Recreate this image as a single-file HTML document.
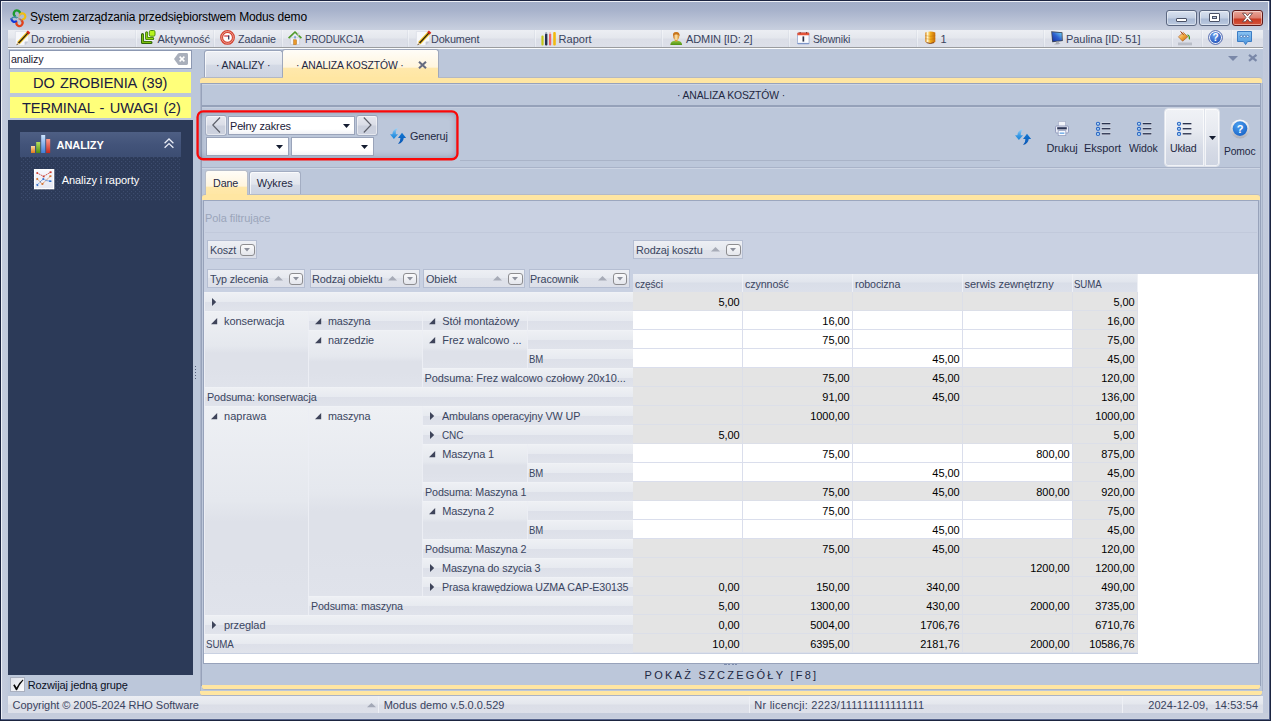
<!DOCTYPE html><html><head><meta charset="utf-8"><title>Modus</title><style>
*{box-sizing:border-box;margin:0;padding:0}
html,body{width:1271px;height:721px;overflow:hidden;background:#bcc7da}
body{font-family:"Liberation Sans",sans-serif;font-size:11px;color:#1e2842;position:relative}
div{position:absolute;white-space:pre}
svg{position:absolute;overflow:visible}
.t{line-height:14px;height:14px}
.r{text-align:right}
</style></head><body>
<div style="left:0px;top:0px;width:1271px;height:721px;background:#1b2440"></div>
<div style="left:1px;top:1px;width:1269px;height:719px;background:#55638c"></div>
<div style="left:1px;top:1px;width:1268px;height:718px;background:#edf0f6"></div>
<div style="left:2px;top:2px;width:1266px;height:716px;background:linear-gradient(#a2aec8,#a7b2cb 8px,#c2cadb 24px,#cad1e0 29px,#bcc6da 60px,#bcc6da)"></div>
<div style="left:2px;top:30px;width:6px;height:683px;background:linear-gradient(90deg,#c4ccdd,#bfc8da)"></div>
<div style="left:1263px;top:30px;width:5px;height:683px;background:linear-gradient(90deg,#c3cbdd,#c1c9db)"></div>
<div style="left:1268px;top:30px;width:1px;height:689px;background:#ccd2e0"></div>
<div style="left:2px;top:713px;width:1266px;height:5px;background:#c5ccdc"></div>
<div style="left:2px;top:718px;width:1266px;height:1px;background:#cbd1df"></div>
<svg style="left:10.4px;top:10.2px" width="15.6" height="15.6" viewBox="0 0 16.4 17"><g fill="none" stroke-linecap="round"><path d="M5.2 6.6A3.4 3.4 0 1 1 10.6 4.4" stroke="#1c9a2c" stroke-width="2.4"/><path d="M5.2 6.6A3.4 3.4 0 0 0 8.2 8.2" stroke="#4c9c8c" stroke-width="1.3"/><path d="M10.8 4.6A3.3 3.3 0 1 1 13.6 10.2" stroke="#f0be14" stroke-width="2.4"/><path d="M10.8 4.6A3.3 3.3 0 0 0 9.6 7.6" stroke="#d0b070" stroke-width="1.3"/><path d="M12.4 11.6A3.4 3.4 0 1 1 6.8 13.0" stroke="#e2421a" stroke-width="2.4"/><path d="M12.4 11.6A3.4 3.4 0 0 0 9.4 9.6" stroke="#b86a50" stroke-width="1.3"/><path d="M6.2 12.4A3.4 3.4 0 0 1 1.2 9.8" stroke="#1238d8" stroke-width="2.4"/><path d="M1.2 9.8A3.4 3.4 0 0 1 6.6 8.6" stroke="#3c84a8" stroke-width="1.3"/></g></svg>
<div class="t" style="left:30px;top:9px;color:#000;font-size:12px;line-height:16px;height:16px;letter-spacing:-0.152px;">System zarządzania przedsiębiorstwem Modus demo</div>
<div style="left:1166px;top:10px;width:31px;height:16px;background:linear-gradient(#d9e2f0,#c3cfe3 7px,#a9b9d4 8px,#bccae0);border:1px solid #5b6781;border-radius:3px;box-shadow:inset 0 0 0 1px rgba(255,255,255,.45)"></div>
<div style="left:1199px;top:10px;width:31px;height:16px;background:linear-gradient(#d9e2f0,#c3cfe3 7px,#a9b9d4 8px,#bccae0);border:1px solid #5b6781;border-radius:3px;box-shadow:inset 0 0 0 1px rgba(255,255,255,.45)"></div>
<div style="left:1232px;top:10px;width:31px;height:16px;background:linear-gradient(#e9a79b,#dc7c6c 7px,#c93a22 8px,#d4553c);border:1px solid #5e1a1a;border-radius:3px;box-shadow:inset 0 0 0 1px rgba(255,255,255,.45)"></div>
<div style="left:1176px;top:18px;width:11px;height:4px;background:#fff;border:1px solid #4a5166;border-radius:1px"></div>
<div style="left:1209px;top:13px;width:11px;height:9px;background:#fff;border:1px solid #4a5166;border-radius:1px"></div>
<div style="left:1212px;top:16px;width:5px;height:3px;background:#bccae0;border:1px solid #4a5166"></div>
<svg style="left:1241px;top:12px" width="13" height="11" viewBox="0 0 13 11"><path d="M1.5 1.2H4.4L6.5 3.8L8.6 1.2H11.5L8 5.5L11.5 9.8H8.6L6.5 7.2L4.4 9.8H1.5L5 5.5Z" fill="#fff" stroke="#5a3a3a" stroke-width=".8"/></svg>
<div style="left:8px;top:30px;width:1255px;height:17px;background:linear-gradient(#eceef3,#e4e7ed 8px,#dbdee7 9px,#dde0e9)"></div>
<div style="left:8px;top:47px;width:1255px;height:1px;background:#9a9c9f"></div>
<div style="left:8px;top:48px;width:1255px;height:1px;background:#fbfcfd"></div>
<div style="left:136px;top:30px;width:1px;height:17px;background:linear-gradient(#f3f5f8,#e6e9f0)"></div>
<div style="left:135px;top:30px;width:1px;height:17px;background:linear-gradient(#e2e5ec,#d3d8e2)"></div>
<div style="left:214px;top:30px;width:1px;height:17px;background:linear-gradient(#f3f5f8,#e6e9f0)"></div>
<div style="left:213px;top:30px;width:1px;height:17px;background:linear-gradient(#e2e5ec,#d3d8e2)"></div>
<div style="left:282px;top:30px;width:1px;height:17px;background:linear-gradient(#f3f5f8,#e6e9f0)"></div>
<div style="left:281px;top:30px;width:1px;height:17px;background:linear-gradient(#e2e5ec,#d3d8e2)"></div>
<div style="left:408px;top:30px;width:1px;height:17px;background:linear-gradient(#f3f5f8,#e6e9f0)"></div>
<div style="left:407px;top:30px;width:1px;height:17px;background:linear-gradient(#e2e5ec,#d3d8e2)"></div>
<div style="left:535px;top:30px;width:1px;height:17px;background:linear-gradient(#f3f5f8,#e6e9f0)"></div>
<div style="left:534px;top:30px;width:1px;height:17px;background:linear-gradient(#e2e5ec,#d3d8e2)"></div>
<div style="left:662px;top:30px;width:1px;height:17px;background:linear-gradient(#f3f5f8,#e6e9f0)"></div>
<div style="left:661px;top:30px;width:1px;height:17px;background:linear-gradient(#e2e5ec,#d3d8e2)"></div>
<div style="left:789px;top:30px;width:1px;height:17px;background:linear-gradient(#f3f5f8,#e6e9f0)"></div>
<div style="left:788px;top:30px;width:1px;height:17px;background:linear-gradient(#e2e5ec,#d3d8e2)"></div>
<div style="left:917px;top:30px;width:1px;height:17px;background:linear-gradient(#f3f5f8,#e6e9f0)"></div>
<div style="left:916px;top:30px;width:1px;height:17px;background:linear-gradient(#e2e5ec,#d3d8e2)"></div>
<div style="left:1044px;top:30px;width:1px;height:17px;background:linear-gradient(#f3f5f8,#e6e9f0)"></div>
<div style="left:1043px;top:30px;width:1px;height:17px;background:linear-gradient(#e2e5ec,#d3d8e2)"></div>
<div style="left:1172px;top:30px;width:1px;height:17px;background:linear-gradient(#f3f5f8,#e6e9f0)"></div>
<div style="left:1171px;top:30px;width:1px;height:17px;background:linear-gradient(#e2e5ec,#d3d8e2)"></div>
<div style="left:1202px;top:30px;width:1px;height:17px;background:linear-gradient(#f3f5f8,#e6e9f0)"></div>
<div style="left:1201px;top:30px;width:1px;height:17px;background:linear-gradient(#e2e5ec,#d3d8e2)"></div>
<div style="left:1232px;top:30px;width:1px;height:17px;background:linear-gradient(#f3f5f8,#e6e9f0)"></div>
<div style="left:1231px;top:30px;width:1px;height:17px;background:linear-gradient(#e2e5ec,#d3d8e2)"></div>
<svg style="left:14.5px;top:30.5px" width="15" height="15" viewBox="0 0 15 15"><path d="M.4 .5H13.6V10.6L9.6 14.6H.4Z" fill="#f7f8fb" stroke="#d9dce5" stroke-width=".7"/><path d="M13.6 10.6L9.6 14.6V11.4Q9.6 10.6 10.4 10.6Z" fill="#c3c8d4"/><path d="M3.4 12.2L13 1.9" stroke="#f0c020" stroke-width="3.4"/><path d="M3.4 12.2L13 1.9" stroke="#241e14" stroke-width="1.3"/><path d="M12.5 2.4L14.1 .7" stroke="#d8281c" stroke-width="3.4"/><path d="M1.5 14.2L2.2 11.1L4.6 13.3Z" fill="#e0c090"/><path d="M1.5 14.2L1.9 12.7L2.9 13.7Z" fill="#3a3a3a"/></svg>
<div class="t" style="left:30.5px;top:32px;color:#39435e;letter-spacing:-0.120px;transform:scaleX(0.9697);transform-origin:0 50%;">Do zrobienia</div>
<svg style="left:140.8px;top:30.4px" width="15" height="15" viewBox="0 0 15 15"><g fill="none" stroke-linejoin="round" stroke-linecap="round"><path d="M1.5 4.6V12.4H10" stroke="#2e6208" stroke-width="3"/><path d="M1.6 4.8V12.3H9.8" stroke="#7cc010" stroke-width="1.3"/><path d="M5.6 2.8V8.6H11.8" stroke="#fff" stroke-width="4.2" opacity=".85"/><path d="M5.6 2.8V8.6H11.8" stroke="#3a7408" stroke-width="3"/><path d="M5.7 3.0V8.5H11.6" stroke="#94d814" stroke-width="1.3"/></g><rect x="7.6" y="-.2" width="7" height="7" rx="1.6" fill="#fff" opacity=".85"/><rect x="8.3" y=".5" width="5.7" height="5.7" rx="1.3" fill="#b8f41e" stroke="#4c8c10" stroke-width="1"/></svg>
<div class="t" style="left:157.5px;top:32px;color:#39435e;">Aktywność</div>
<svg style="left:219.9px;top:30.4px" width="15" height="15" viewBox="0 0 15 15"><circle cx="7.5" cy="7.4" r="5.9" fill="#fdfeff" stroke="#d2402e" stroke-width="3"/><circle cx="7.5" cy="7.4" r="5.9" fill="none" stroke="#f0a89c" stroke-width=".9"/><path d="M4.2 6H9.2" stroke="#c4202a" stroke-width="1.1"/><path d="M8.7 5.6V9.6" stroke="#2a3058" stroke-width="1.2"/></svg>
<div class="t" style="left:237.7px;top:32px;color:#39435e;letter-spacing:-0.120px;transform:scaleX(0.9711);transform-origin:0 50%;">Zadanie</div>
<svg style="left:288px;top:30.5px" width="14" height="15" viewBox="0 0 14 15"><path d="M2.4 6.8H11.6V13.6H2.4Z" fill="#f1f3f8" stroke="#c4c9d6" stroke-width=".7"/><path d="M0.6 7.2L7 1.0L13.4 7.2" fill="none" stroke="#4f9a2a" stroke-width="1.7" stroke-linejoin="round"/><rect x="5.6" y="8.8" width="2.9" height="4.8" fill="#e8982a" stroke="#b86d10" stroke-width=".5"/><rect x="6.1" y="5.2" width="1.9" height="2.2" fill="#7ea6d8"/><rect x="9.6" y="1.6" width="1.6" height="3" fill="#cfcfd4"/></svg>
<div class="t" style="left:304.5px;top:32px;color:#39435e;letter-spacing:-0.120px;transform:scaleX(0.8837);transform-origin:0 50%;">PRODUKCJA</div>
<svg style="left:415.7px;top:30.5px" width="15" height="15" viewBox="0 0 15 15"><path d="M.4 .5H13.6V10.6L9.6 14.6H.4Z" fill="#f7f8fb" stroke="#d9dce5" stroke-width=".7"/><path d="M13.6 10.6L9.6 14.6V11.4Q9.6 10.6 10.4 10.6Z" fill="#c3c8d4"/><path d="M3.4 12.2L13 1.9" stroke="#f0c020" stroke-width="3.4"/><path d="M3.4 12.2L13 1.9" stroke="#241e14" stroke-width="1.3"/><path d="M12.5 2.4L14.1 .7" stroke="#d8281c" stroke-width="3.4"/><path d="M1.5 14.2L2.2 11.1L4.6 13.3Z" fill="#e0c090"/><path d="M1.5 14.2L1.9 12.7L2.9 13.7Z" fill="#3a3a3a"/></svg>
<div class="t" style="left:431.4px;top:32px;color:#39435e;letter-spacing:-0.120px;transform:scaleX(0.9841);transform-origin:0 50%;">Dokument</div>
<svg style="left:541px;top:30.5px" width="16" height="15" viewBox="0 0 16 15"><rect x="0.4" y="4.5" width="2.2" height="10" rx="1" fill="#c7c817"/><rect x="4.0" y="2.5" width="2.4" height="12" rx="1" fill="#23304f"/><rect x="8.0" y="2.5" width="2.2" height="12" rx="1" fill="#f0646a"/><rect x="12.2" y="1.0" width="2.6" height="13.5" rx="1" fill="#f2b90f"/><rect x="4.3" y="1.2" width="1.8" height="1.6" fill="#9aa3b8"/><rect x="8.2" y="1.2" width="1.8" height="1.6" fill="#f3b9b9"/></svg>
<div class="t" style="left:558.6px;top:32px;color:#39435e;">Raport</div>
<svg style="left:670px;top:31.5px" width="13" height="13" viewBox="0 0 13 13"><defs><linearGradient id="ug" x1="0" y1="0" x2="0" y2="1"><stop offset="0" stop-color="#8cc63c"/><stop offset="1" stop-color="#4f8f12"/></linearGradient><linearGradient id="uh" x1="0" y1="0" x2="1" y2="0"><stop offset="0" stop-color="#c66a14"/><stop offset=".45" stop-color="#ffe9b0"/><stop offset="1" stop-color="#d98a28"/></linearGradient></defs><path d="M0.3 13Q0.6 9.4 4.4 8.8H8Q11.8 9.4 12.1 13Z" fill="url(#ug)"/><rect x="4.9" y="6.8" width="2.6" height="2.6" fill="#e0973a"/><path d="M3.2 3.4Q3.2 .3 6.2 .3Q9.3 .3 9.3 3.4Q9.3 7.9 6.2 7.9Q3.2 7.9 3.2 3.4Z" fill="url(#uh)"/><path d="M3.0 4.2Q2.6 .1 6.2 .1Q9.9 .1 9.5 4.2Q9 2.4 6.2 2.6Q3.6 2.4 3.0 4.2Z" fill="#c8751c"/></svg>
<div class="t" style="left:686px;top:32px;color:#39435e;letter-spacing:-0.103px;">ADMIN [ID: 2]</div>
<svg style="left:796.5px;top:31.5px" width="13" height="13" viewBox="0 0 13 13"><rect x=".5" y=".8" width="11.6" height="11" rx="1" fill="#fbfcff" stroke="#9fb0d4" stroke-width=".9"/><path d="M.4 1.6Q.4 .5 1.5 .5H11.1Q12.2 .5 12.2 1.6V3.2H.4Z" fill="#e65438"/><rect x=".4" y="10.9" width="11.8" height="1.2" fill="#7d96c8"/><rect x="2.6" y="0" width="1.1" height="1.6" fill="#8a3a30"/><rect x="9" y="0" width="1.1" height="1.6" fill="#8a3a30"/><rect x="5.5" y="4.4" width="1.7" height="5.2" fill="#2d3248"/></svg>
<div class="t" style="left:812.7px;top:32px;color:#39435e;letter-spacing:-0.120px;transform:scaleX(0.9467);transform-origin:0 50%;">Słowniki</div>
<svg style="left:924.5px;top:31.3px" width="11" height="13" viewBox="0 0 11 13"><defs><linearGradient id="cg" x1="0" y1="0" x2="1" y2="0"><stop offset="0" stop-color="#d9820c"/><stop offset=".22" stop-color="#fff6cf"/><stop offset=".5" stop-color="#f3ae1d"/><stop offset="1" stop-color="#c46a08"/></linearGradient></defs><path d="M.3 1.6Q5.3 -.8 10.3 1.6V11Q5.3 13.4 .3 11Z" fill="url(#cg)"/><path d="M.3 4.6Q5.3 6 10.3 4.6M.3 7.6Q5.3 9 10.3 7.6" fill="none" stroke="#b8690a" stroke-width=".5" opacity=".7"/><path d="M1.5 11.6Q5.3 13.4 9.1 11.6" fill="none" stroke="#7a3208" stroke-width=".9"/></svg>
<div class="t" style="left:940.5px;top:32px;color:#39435e;">1</div>
<svg style="left:1051px;top:31px" width="12" height="14" viewBox="0 0 12 14"><defs><linearGradient id="mg" x1="0" y1="1" x2="1" y2="0"><stop offset="0" stop-color="#1430a0"/><stop offset=".5" stop-color="#2f62d0"/><stop offset="1" stop-color="#72d8f8"/></linearGradient></defs><path d="M.2 .2L11.4 1.2L11.8 10L1.2 11.2Z" fill="#3a4254"/><path d="M1.1 1.2L10.6 2.0L10.9 9.2L1.9 10.2Z" fill="url(#mg)"/><path d="M5.4 10.6L7.4 10.4L8.4 12.2L9.6 12.6Q7 14.2 2.8 13.2L4.8 12.4Z" fill="#a9adb6"/></svg>
<div class="t" style="left:1066px;top:32px;color:#39435e;letter-spacing:-0.051px;">Paulina [ID: 51]</div>
<svg style="left:1178px;top:30.6px" width="14" height="15" viewBox="0 0 14 15"><defs><linearGradient id="bg1" x1="0" y1="0" x2="1" y2="1"><stop offset="0" stop-color="#fff3cc"/><stop offset=".5" stop-color="#f1a73a"/><stop offset="1" stop-color="#b85c12"/></linearGradient></defs><path d="M.4 5.8L5.4 1.4L9.8 5.8L4.6 10.2Z" fill="url(#bg1)" stroke="#a5531a" stroke-width=".6"/><path d="M2.6 .4L5.8 4.2" stroke="#a04018" stroke-width="1"/><path d="M8.6 3.6Q12.6 3.4 12.0 8.8Q10.2 8.4 10.6 5.6Z" fill="#3f9a18"/><rect x="0" y="11.5" width="14" height="2.8" fill="#b9bdc7"/></svg>
<svg style="left:1207.5px;top:30.4px" width="15" height="15" viewBox="0 0 15 15"><defs><radialGradient id="hg" cx=".4" cy=".3" r=".8"><stop offset="0" stop-color="#6fa2ee"/><stop offset="1" stop-color="#1f4fb8"/></radialGradient></defs><circle cx="7.5" cy="7.5" r="6.9" fill="#fff" stroke="#3550a0" stroke-width=".9"/><circle cx="7.5" cy="7.5" r="5.5" fill="url(#hg)"/><text x="7.5" y="11.2" font-family="Liberation Sans" font-weight="bold" font-size="10" fill="#fff" text-anchor="middle">?</text></svg>
<svg style="left:1237px;top:31px" width="15" height="14" viewBox="0 0 15 14"><defs><linearGradient id="chg" x1="0" y1="0" x2="0" y2="1"><stop offset="0" stop-color="#8cc4f2"/><stop offset="1" stop-color="#4a94dc"/></linearGradient></defs><path d="M.5 .5H14.5V10.5H10.6L8.6 13.6L6.6 10.5H.5Z" fill="url(#chg)" stroke="#3b7cc4" stroke-width="1"/><g fill="#e8f3fd" stroke="#2c66b0" stroke-width=".7"><circle cx="4.3" cy="5.4" r="1.2"/><circle cx="7.5" cy="5.4" r="1.2"/><circle cx="10.7" cy="5.4" r="1.2"/></g></svg>
<div style="left:8px;top:49px;width:1255px;height:647px;background:#bcc7da"></div>
<div style="left:9px;top:50px;width:183px;height:19px;background:#fff;border:1px solid #8c98b2"></div>
<div class="t" style="left:10.7px;top:52px;color:#1c2033;letter-spacing:-0.120px;transform:scaleX(0.9758);transform-origin:0 50%;">analizy</div>
<svg style="left:174px;top:53px" width="14" height="12" viewBox="0 0 14 12"><path d="M0 6L4 .6Q4.6 0 5.4 0H12.6Q14 0 14 1.4V10.6Q14 12 12.6 12H5.4Q4.6 12 4 11.4Z" fill="#a9afbb"/><path d="M5.6 3.6L10.4 8.4M10.4 3.6L5.6 8.4" stroke="#fff" stroke-width="1.5"/></svg>
<div style="left:10px;top:72px;width:181px;height:21px;background:#ffff7a"></div>
<div style="left:10px;top:97px;width:181px;height:21px;background:#ffff7a"></div>
<div class="t" style="left:33.2px;top:72.3px;color:#1a2040;font-size:15.5px;line-height:21px;height:21px;word-spacing:1.6px;letter-spacing:-0.169px;transform:scaleX(0.9414);transform-origin:0 50%;">DO ZROBIENIA (39)</div>
<div class="t" style="left:22px;top:97.4px;color:#1a2040;font-size:15.5px;line-height:21px;height:21px;word-spacing:1.6px;letter-spacing:-0.169px;transform:scaleX(0.9441);transform-origin:0 50%;">TERMINAL - UWAGI (2)</div>
<div style="left:8px;top:120px;width:185px;height:555px;background:#2c3a58"></div>
<svg style="left:20px;top:157px" width="161" height="44" viewBox="0 0 161 44"><defs><pattern id="dp" width="4" height="4" patternUnits="userSpaceOnUse"><rect x="1" y="0" width="1.2" height="1.2" fill="#3d4c6e"/><rect x="3" y="2" width="1.2" height="1.2" fill="#3d4c6e"/></pattern></defs><rect width="161" height="44" fill="#2c3a58"/><rect width="161" height="44" fill="url(#dp)"/></svg>
<div style="left:20px;top:132px;width:161px;height:25px;background:linear-gradient(#4e5f84,#43547a 12px,#3c4d72)"></div>
<svg style="left:31px;top:135px" width="20" height="18" viewBox="0 0 20 18"><defs><linearGradient id="b1" x1="0" y1="0" x2="0" y2="1"><stop offset="0" stop-color="#ffd9a0"/><stop offset="1" stop-color="#e07a18"/></linearGradient><linearGradient id="b2" x1="0" y1="0" x2="0" y2="1"><stop offset="0" stop-color="#b6e05a"/><stop offset="1" stop-color="#4f9010"/></linearGradient><linearGradient id="b3" x1="0" y1="0" x2="0" y2="1"><stop offset="0" stop-color="#cfe6ff"/><stop offset="1" stop-color="#3f7ed8"/></linearGradient><linearGradient id="b4" x1="0" y1="0" x2="0" y2="1"><stop offset="0" stop-color="#ff9a8a"/><stop offset="1" stop-color="#c8281c"/></linearGradient></defs><rect x="0" y="11" width="4" height="7" fill="url(#b1)"/><rect x="5.2" y="7" width="4" height="11" fill="url(#b2)"/><rect x="10.2" y="0" width="4" height="18" fill="url(#b3)"/><rect x="15.2" y="4" width="4" height="14" fill="url(#b4)"/></svg>
<div class="t" style="left:56.5px;top:138px;color:#fff;font-weight:bold;letter-spacing:-0.053px;">ANALIZY</div>
<svg style="left:163.7px;top:138px" width="10" height="11" viewBox="0 0 10 11"><path d="M.6 5.2L5 1L9.4 5.2M.6 9.8L5 5.6L9.4 9.8" fill="none" stroke="#e8ecf6" stroke-width="1.3"/></svg>
<svg style="left:33.8px;top:168.8px" width="20.3" height="20.3" viewBox="0 0 20.3 20.3"><defs><linearGradient id="cig" x1="0" y1="0" x2="0" y2="1"><stop offset="0" stop-color="#f6f7fc"/><stop offset="1" stop-color="#e6e9f4"/></linearGradient></defs><rect x="0" y="0" width="20.3" height="20.3" fill="#ffffff"/><rect x="1.2" y="1.2" width="17.9" height="17.9" fill="url(#cig)"/><path d="M3.2 4L9.6 7.4L16.6 3.2" fill="none" stroke="#d0483c" stroke-width=".9" stroke-dasharray="1.4 .6"/><path d="M3.2 10L8.4 15L16.4 7.2" fill="none" stroke="#d87a3c" stroke-width=".9" stroke-dasharray="1.4 .6"/><path d="M3.2 16L9.2 10L12.4 11.6L16.4 12.2" fill="none" stroke="#3c7cd0" stroke-width=".9" stroke-dasharray="1.4 .6"/><g fill="#c8382e"><rect x="2.4" y="3.2" width="1.7" height="1.7"/><rect x="8.8" y="6.6" width="1.7" height="1.7"/><rect x="15.6" y="2.4" width="2" height="1.7"/></g><g fill="#d2702c"><rect x="2.3" y="9.1" width="1.9" height="1.7" transform="rotate(-30 3.2 10)"/><rect x="7.5" y="14.1" width="1.8" height="1.8"/><rect x="15.4" y="6.3" width="2" height="1.8"/></g><g fill="#2c6cc8"><rect x="2.3" y="15.1" width="2" height="1.6" transform="rotate(35 3.2 16)"/><rect x="8.4" y="9.2" width="1.8" height="1.6"/><rect x="15.2" y="11.4" width="2.2" height="1.6"/></g></svg>
<div class="t" style="left:61.7px;top:173px;color:#fff;letter-spacing:-0.045px;">Analizy i raporty</div>
<div style="left:10px;top:677px;width:15px;height:15px;background:linear-gradient(135deg,#dfe2ea,#fbfbfd);border:1px solid #aab0bf"></div>
<svg style="left:10.5px;top:677.5px" width="14" height="14" viewBox="0 0 14 14"><path d="M2.2 7.2L3.6 6.2L5.6 9.4Q8 4.6 11.8 1.6L12.4 2.2Q8.4 6.6 6 12.2H5Z" fill="#0a0a0a"/></svg>
<div class="t" style="left:27.7px;top:678px;color:#0a0f24;letter-spacing:-0.096px;">Rozwijaj jedną grupę</div>
<div style="left:195px;top:366px;width:1px;height:1px;background:#55607c"></div>
<div style="left:195px;top:369px;width:1px;height:1px;background:#55607c"></div>
<div style="left:195px;top:372px;width:1px;height:1px;background:#55607c"></div>
<div style="left:195px;top:375px;width:1px;height:1px;background:#55607c"></div>
<div style="left:195px;top:378px;width:1px;height:1px;background:#55607c"></div>
<div style="left:8px;top:696px;width:1255px;height:17px;background:linear-gradient(#eceef3,#e4e7ed 8px,#dbdee7 9px,#dde0e9)"></div>
<div style="left:749px;top:696px;width:1px;height:17px;background:#eef0f5"></div>
<div style="left:1122px;top:696px;width:1px;height:17px;background:#eef0f5"></div>
<div class="t" style="left:12.6px;top:698px;color:#39435e;letter-spacing:-0.046px;">Copyright © 2005-2024 RHO Software</div>
<svg style="left:367px;top:702.6px" width="9" height="4.2" viewBox="0 0 9 4.2"><path d="M0 4.2H9L4.5 0Z" fill="#a3a8b6"/></svg>
<div style="left:378px;top:696px;width:1px;height:17px;background:#eef0f5"></div>
<div class="t" style="left:383.7px;top:698px;color:#39435e;letter-spacing:0.024px;">Modus demo v.5.0.0.529</div>
<div class="t" style="left:754.2px;top:698px;color:#39435e;letter-spacing:0.259px;">Nr licencji: 2223/111111111111111</div>
<div class="t" style="left:1148.2px;top:698px;color:#39435e;letter-spacing:0.078px;">2024-12-09,  14:53:54</div>
<div style="left:204px;top:50px;width:79px;height:28px;background:linear-gradient(#eef0f5,#e1e5ed 13px,#d3d9e5 14.5px,#cdd3e1);border:1px solid #98a3ba;border-bottom:none;border-radius:3px 3px 0 0;box-shadow:inset 1px 1px 0 rgba(255,255,255,.7)"></div>
<div class="t" style="left:216px;top:57.5px;color:#1e2842;letter-spacing:-0.120px;transform:scaleX(0.9499);transform-origin:0 50%;">· ANALIZY ·</div>
<div style="left:282px;top:49px;width:157px;height:30px;background:linear-gradient(#fffdf8,#fff5de 17px,#ffe8ab 18.5px,#ffe6a2);border:1px solid #9fa8bc;border-bottom:none;border-radius:3px 3px 0 0"></div>
<div class="t" style="left:296.3px;top:58px;color:#1e2842;letter-spacing:-0.120px;transform:scaleX(0.9409);transform-origin:0 50%;">· ANALIZA KOSZTÓW ·</div>
<svg style="left:418px;top:60.5px" width="9" height="8" viewBox="0 0 9 8"><path d="M1 .8L8 7.2M8 .8L1 7.2" stroke="#666c80" stroke-width="2.1"/></svg>
<svg style="left:1228px;top:56px" width="10" height="5" viewBox="0 0 10 5"><path d="M0 0H10L5.0 5Z" fill="#7a88a8"/></svg>
<svg style="left:1248px;top:54px" width="9.5" height="7.6" viewBox="0 0 9.5 7.6"><path d="M1 .8L8.5 6.8M8.5 .8L1 6.8" stroke="#7a88a8" stroke-width="2.2"/></svg>
<div style="left:200px;top:77px;width:1062px;height:6px;background:#ffe6a2;border-radius:3px 3px 0 0;border-top:1px solid #b3b8c4"></div>
<div style="left:283px;top:77px;width:155px;height:3px;background:#ffe6a2"></div>
<div style="left:199.5px;top:83px;width:1063px;height:608px;border-left:1px solid #aab4c9;border-right:1px solid #aab4c9"></div>
<div style="left:201.4px;top:83px;width:1059.6px;height:603px;border:1px solid #97a2ba;background:#bcc7da"></div>
<div style="left:202px;top:84px;width:1058px;height:1px;background:#cdd5e4"></div>
<div class="t" style="left:677.3px;top:88px;color:#1e2842;letter-spacing:-0.120px;transform:scaleX(0.9435);transform-origin:0 50%;">· ANALIZA KOSZTÓW ·</div>
<div style="left:202px;top:105.4px;width:1058px;height:1.2px;background:#95a1b9"></div>
<div style="left:202px;top:106.6px;width:1058px;height:1px;background:#c6cfe0"></div>
<div style="left:202px;top:685px;width:1058px;height:5px;background:#ffe6a2;border-radius:0 0 3px 3px;border-bottom:1px solid #aab3c6"></div>
<div style="left:200px;top:691px;width:1062px;height:5px;background:#ffe6a2;border-radius:0 0 3px 3px;border-bottom:1px solid #aab3c6"></div>
<div style="left:197.5px;top:111.4px;width:260px;height:48px;border-radius:6px;box-shadow:inset 0 0 7px 1px rgba(70,82,115,.45)"></div>
<svg style="left:190px;top:105px" width="275" height="60" viewBox="0 0 275 60"><rect x="7.55" y="6.4" width="259.9" height="47.85" rx="5.6" fill="none" stroke="#fa0808" stroke-width="2.3"/></svg>
<div style="left:205px;top:115px;width:21.8px;height:21px;background:linear-gradient(#e6e8ef,#dadde7 9px,#cbd0dd 10px,#cdd2df);border:1px solid #a3adc2;border-top-color:#98a3b9;border-radius:3px;box-shadow:inset 0 0 0 1px rgba(255,255,255,.5)"></div>
<svg style="left:211.5px;top:117px" width="9" height="16" viewBox="0 0 9 16"><path d="M8 .5L.8 8L8 15.5" fill="none" stroke="#5c5f69" stroke-width="1.15"/></svg>
<div style="left:228px;top:116.3px;width:127px;height:18.7px;background:linear-gradient(#fff,#fff 12px,#f1f2f6);border:1px solid #9aa4ba"></div>
<div class="t" style="left:230.3px;top:119px;color:#1a2038;letter-spacing:-0.120px;transform:scaleX(0.9895);transform-origin:0 50%;">Pełny zakres</div>
<svg style="left:342.5px;top:124px" width="7" height="4" viewBox="0 0 7 4"><path d="M0 0H7L3.5 4Z" fill="#141c30"/></svg>
<div style="left:356px;top:115px;width:21.8px;height:21px;background:linear-gradient(#e6e8ef,#dadde7 9px,#cbd0dd 10px,#cdd2df);border:1px solid #a3adc2;border-top-color:#98a3b9;border-radius:3px;box-shadow:inset 0 0 0 1px rgba(255,255,255,.5)"></div>
<svg style="left:362.5px;top:117px" width="9" height="16" viewBox="0 0 9 16"><path d="M.8 .5L8 8L.8 15.5" fill="none" stroke="#5c5f69" stroke-width="1.15"/></svg>
<div style="left:206px;top:136.5px;width:83px;height:19.6px;background:linear-gradient(#fff,#fff 12px,#f1f2f6);border:1px solid #9aa4ba"></div>
<svg style="left:276px;top:145px" width="7" height="4" viewBox="0 0 7 4"><path d="M0 0H7L3.5 4Z" fill="#141c30"/></svg>
<div style="left:291px;top:136.5px;width:83px;height:19.6px;background:linear-gradient(#fff,#fff 12px,#f1f2f6);border:1px solid #9aa4ba"></div>
<svg style="left:361px;top:145px" width="7" height="4" viewBox="0 0 7 4"><path d="M0 0H7L3.5 4Z" fill="#141c30"/></svg>
<svg style="left:390px;top:128px" width="16" height="16" viewBox="0 0 16 16"><defs><linearGradient id="rf1" x1="0" y1="0" x2="0" y2="1"><stop offset="0" stop-color="#a4d6f8"/><stop offset=".55" stop-color="#3c9ce6"/><stop offset="1" stop-color="#1682d8"/></linearGradient><linearGradient id="rf2" x1="0" y1="0" x2="0" y2="1"><stop offset="0" stop-color="#1278d4"/><stop offset="1" stop-color="#0a56b4"/></linearGradient></defs><path d="M8 0Q2.6 1.2 2.4 6.2H0L3.9 11.1L8.1 6.2H5.8Q5.4 2.4 8 0Z" fill="url(#rf1)"/><path d="M8 15.9Q13.4 14.6 13.7 9.9H16.1L12 4.7L8 9.9H10.4Q10.6 13.6 8 15.9Z" fill="url(#rf2)"/></svg>
<div class="t" style="left:409.6px;top:129px;color:#1e2842;letter-spacing:-0.120px;transform:scaleX(0.9869);transform-origin:0 50%;">Generuj</div>
<div style="left:460px;top:160px;width:540px;height:1px;background:#aab4c8"></div>
<svg style="left:1015px;top:129px" width="16" height="16" viewBox="0 0 16 16"><defs><linearGradient id="rf1" x1="0" y1="0" x2="0" y2="1"><stop offset="0" stop-color="#a4d6f8"/><stop offset=".55" stop-color="#3c9ce6"/><stop offset="1" stop-color="#1682d8"/></linearGradient><linearGradient id="rf2" x1="0" y1="0" x2="0" y2="1"><stop offset="0" stop-color="#1278d4"/><stop offset="1" stop-color="#0a56b4"/></linearGradient></defs><path d="M8 0Q2.6 1.2 2.4 6.2H0L3.9 11.1L8.1 6.2H5.8Q5.4 2.4 8 0Z" fill="url(#rf1)"/><path d="M8 15.9Q13.4 14.6 13.7 9.9H16.1L12 4.7L8 9.9H10.4Q10.6 13.6 8 15.9Z" fill="url(#rf2)"/></svg>
<svg style="left:1055px;top:121px" width="14" height="15" viewBox="0 0 14 15"><rect x="3.4" y=".4" width="7.2" height="5.6" fill="#f2f4fa" stroke="#aeb6cc" stroke-width=".8"/><rect x=".5" y="5" width="13" height="7" rx="1.2" fill="#e9ecf6" stroke="#8a94b8" stroke-width=".9"/><rect x="2.2" y="6.2" width="9.6" height="2.2" fill="#2d3656"/><rect x="3.2" y="9.6" width="7.6" height="5" fill="#fbfcff" stroke="#97a1c0" stroke-width=".8"/><rect x="4.6" y="11.4" width="4.8" height="1.6" fill="#7db4ea"/></svg>
<div class="t" style="left:1046.4px;top:141px;color:#1e2842;letter-spacing:-0.116px;">Drukuj</div>
<svg style="left:1096px;top:122px" width="15" height="14" viewBox="0 0 15 14"><path d="M5.2 1.7H14.8" stroke="#eef0f5" stroke-width="2.6" opacity=".6"/><circle cx="2" cy="1.8" r="1.55" fill="#c8ecfc" stroke="#2a66c4" stroke-width="1.15"/><path d="M5.7 1.7H14.4" stroke="#1a2340" stroke-width="1.25"/><path d="M5.2 6.75H14.8" stroke="#eef0f5" stroke-width="2.6" opacity=".6"/><circle cx="2" cy="6.85" r="1.55" fill="#c8ecfc" stroke="#2a66c4" stroke-width="1.15"/><path d="M5.7 6.75H14.4" stroke="#1a2340" stroke-width="1.25"/><path d="M5.2 11.8H14.8" stroke="#eef0f5" stroke-width="2.6" opacity=".6"/><circle cx="2" cy="11.9" r="1.55" fill="#c8ecfc" stroke="#2a66c4" stroke-width="1.15"/><path d="M5.7 11.8H14.4" stroke="#1a2340" stroke-width="1.25"/></svg>
<div class="t" style="left:1084.1px;top:141px;color:#1e2842;letter-spacing:-0.057px;">Eksport</div>
<svg style="left:1137px;top:122px" width="15" height="14" viewBox="0 0 15 14"><path d="M5.2 1.7H14.8" stroke="#eef0f5" stroke-width="2.6" opacity=".6"/><circle cx="2" cy="1.8" r="1.55" fill="#c8ecfc" stroke="#2a66c4" stroke-width="1.15"/><path d="M5.7 1.7H14.4" stroke="#1a2340" stroke-width="1.25"/><path d="M5.2 6.75H14.8" stroke="#eef0f5" stroke-width="2.6" opacity=".6"/><circle cx="2" cy="6.85" r="1.55" fill="#c8ecfc" stroke="#2a66c4" stroke-width="1.15"/><path d="M5.7 6.75H14.4" stroke="#1a2340" stroke-width="1.25"/><path d="M5.2 11.8H14.8" stroke="#eef0f5" stroke-width="2.6" opacity=".6"/><circle cx="2" cy="11.9" r="1.55" fill="#c8ecfc" stroke="#2a66c4" stroke-width="1.15"/><path d="M5.7 11.8H14.4" stroke="#1a2340" stroke-width="1.25"/></svg>
<div class="t" style="left:1129px;top:141px;color:#1e2842;letter-spacing:-0.120px;transform:scaleX(0.9545);transform-origin:0 50%;">Widok</div>
<div style="left:1164px;top:108px;width:41px;height:59px;background:linear-gradient(#f0f2f6,#e8ebf1 35%,#d6dbe6 70%,#ced4e1);border:1px solid #dfe3eb;border-radius:4px 0 0 4px;box-shadow:inset 0 0 0 1px rgba(255,255,255,.7)"></div>
<div style="left:1204px;top:108px;width:16px;height:59px;background:linear-gradient(#f0f2f6,#e8ebf1 35%,#d6dbe6 70%,#ced4e1);border:1px solid #dfe3eb;border-radius:0 4px 4px 0;box-shadow:inset 0 0 0 1px rgba(255,255,255,.7)"></div>
<svg style="left:1177px;top:122px" width="15" height="14" viewBox="0 0 15 14"><path d="M5.2 1.7H14.8" stroke="#eef0f5" stroke-width="2.6" opacity=".6"/><circle cx="2" cy="1.8" r="1.55" fill="#c8ecfc" stroke="#2a66c4" stroke-width="1.15"/><path d="M5.7 1.7H14.4" stroke="#1a2340" stroke-width="1.25"/><path d="M5.2 6.75H14.8" stroke="#eef0f5" stroke-width="2.6" opacity=".6"/><circle cx="2" cy="6.85" r="1.55" fill="#c8ecfc" stroke="#2a66c4" stroke-width="1.15"/><path d="M5.7 6.75H14.4" stroke="#1a2340" stroke-width="1.25"/><path d="M5.2 11.8H14.8" stroke="#eef0f5" stroke-width="2.6" opacity=".6"/><circle cx="2" cy="11.9" r="1.55" fill="#c8ecfc" stroke="#2a66c4" stroke-width="1.15"/><path d="M5.7 11.8H14.4" stroke="#1a2340" stroke-width="1.25"/></svg>
<div class="t" style="left:1169.6px;top:141px;color:#1e2842;letter-spacing:-0.120px;transform:scaleX(0.9628);transform-origin:0 50%;">Układ</div>
<svg style="left:1209px;top:136px" width="7" height="4" viewBox="0 0 7 4"><path d="M0 0H7L3.5 4Z" fill="#141c30"/></svg>
<svg style="left:1230px;top:119px" width="20" height="20" viewBox="0 0 20 20"><defs><radialGradient id="hb" cx=".4" cy=".3" r=".9"><stop offset="0" stop-color="#4da0f0"/><stop offset="1" stop-color="#0d58c0"/></radialGradient><linearGradient id="hr" x1="0" y1="0" x2="0" y2="1"><stop offset="0" stop-color="#ffffff"/><stop offset="1" stop-color="#a9adb8"/></linearGradient></defs><circle cx="10" cy="10" r="9.6" fill="url(#hr)"/><circle cx="10" cy="9.6" r="7.3" fill="url(#hb)"/><text x="10" y="13.6" font-family="Liberation Sans" font-weight="bold" font-size="11" fill="#fff" text-anchor="middle">?</text></svg>
<div class="t" style="left:1224.2px;top:144px;color:#1e2842;letter-spacing:-0.120px;transform:scaleX(0.9361);transform-origin:0 50%;">Pomoc</div>
<div style="left:202px;top:167px;width:1058px;height:1px;background:#a9b3c8"></div>
<div style="left:202px;top:168px;width:1058px;height:1px;background:#cdd5e4"></div>
<div style="left:205px;top:170px;width:43px;height:27px;background:linear-gradient(#fffdf8,#fff5de 15px,#ffe8ab 16.5px,#ffe6a2);border:1px solid #b8beca;border-bottom:none;border-radius:3px 3px 0 0"></div>
<div class="t" style="left:213.1px;top:176px;color:#1e2842;letter-spacing:-0.120px;transform:scaleX(0.9761);transform-origin:0 50%;">Dane</div>
<div style="left:249px;top:171px;width:52px;height:24px;background:linear-gradient(#eef0f5,#e1e5ed 12px,#d3d9e5 13.5px,#cdd3e1);border:1px solid #a3adc2;border-bottom:none;border-radius:3px 3px 0 0;box-shadow:inset 1px 1px 0 rgba(255,255,255,.7)"></div>
<div class="t" style="left:256.7px;top:175.5px;color:#1e2842;letter-spacing:-0.096px;">Wykres</div>
<div style="left:202px;top:194px;width:1058px;height:5.7px;background:#ffe6a2;border-radius:3px 3px 0 0;border-top:1px solid #b4bac8"></div>
<div style="left:206px;top:194px;width:41px;height:3px;background:#ffe6a2"></div>
<div style="left:203px;top:200px;width:1056px;height:464px;background:#c9d1e2;border:1px solid #97a2ba;border-top:none"></div>
<div style="left:203px;top:199.7px;width:1056px;height:1px;background:#9ca7be"></div>
<div class="t" style="left:205px;top:211px;color:#9ba5ba;letter-spacing:-0.05px;">Pola filtrujące</div>
<div style="left:205px;top:232px;width:1052px;height:1px;background:#c1c9db"></div>
<div style="left:1138px;top:274px;width:120px;height:389px;background:#fff"></div>
<div style="left:204px;top:654px;width:1054px;height:9px;background:#fff"></div>
<div style="left:207.3px;top:240px;width:49.7px;height:18.6px;background:linear-gradient(#edeff4,#e6e9ef 50%,#dfe2ea 50%,#dde0e9);border:1px solid #b5bed2"></div>
<div class="t" style="left:209.6px;top:242.7px;color:#3a4560;letter-spacing:-0.120px;transform:scaleX(0.9734);transform-origin:0 50%;">Koszt</div>
<div style="left:240.0px;top:243.5px;width:14.5px;height:12px;border:1px solid #8d8d90;border-radius:3px;background:linear-gradient(#fafafb,#e4e6ec)"></div>
<svg style="left:244.3px;top:248px" width="6" height="3.4" viewBox="0 0 6 3.4"><path d="M0 0H6L3.0 3.4Z" fill="#8d919d"/></svg>
<div style="left:633px;top:240px;width:110px;height:18.6px;background:linear-gradient(#edeff4,#e6e9ef 50%,#dfe2ea 50%,#dde0e9);border:1px solid #b5bed2"></div>
<div class="t" style="left:635.6px;top:242.7px;color:#3a4560;letter-spacing:-0.120px;transform:scaleX(0.9862);transform-origin:0 50%;">Rodzaj kosztu</div>
<div style="left:726px;top:243.5px;width:14.5px;height:12px;border:1px solid #8d8d90;border-radius:3px;background:linear-gradient(#fafafb,#e4e6ec)"></div>
<svg style="left:730.3px;top:248px" width="6" height="3.4" viewBox="0 0 6 3.4"><path d="M0 0H6L3.0 3.4Z" fill="#8d919d"/></svg>
<svg style="left:711px;top:247px" width="9" height="4.6" viewBox="0 0 9 4.6"><path d="M0 4.6H9L4.5 0Z" fill="#a7abb7"/></svg>
<div style="left:207.3px;top:269.3px;width:98.2px;height:18.6px;background:linear-gradient(#edeff4,#e6e9ef 50%,#dfe2ea 50%,#dde0e9);border:1px solid #b5bed2"></div>
<div class="t" style="left:209.8px;top:272.0px;color:#3a4560;letter-spacing:-0.120px;transform:scaleX(0.9746);transform-origin:0 50%;">Typ zlecenia</div>
<div style="left:288.5px;top:272.8px;width:14.5px;height:12px;border:1px solid #8d8d90;border-radius:3px;background:linear-gradient(#fafafb,#e4e6ec)"></div>
<svg style="left:292.8px;top:277.3px" width="6" height="3.4" viewBox="0 0 6 3.4"><path d="M0 0H6L3.0 3.4Z" fill="#8d919d"/></svg>
<svg style="left:273.5px;top:276.3px" width="9" height="4.6" viewBox="0 0 9 4.6"><path d="M0 4.6H9L4.5 0Z" fill="#a7abb7"/></svg>
<div style="left:309.5px;top:269.3px;width:110px;height:18.6px;background:linear-gradient(#edeff4,#e6e9ef 50%,#dfe2ea 50%,#dde0e9);border:1px solid #b5bed2"></div>
<div class="t" style="left:311.5px;top:272.0px;color:#3a4560;letter-spacing:-0.120px;transform:scaleX(0.9915);transform-origin:0 50%;">Rodzaj obiektu</div>
<div style="left:402.5px;top:272.8px;width:14.5px;height:12px;border:1px solid #8d8d90;border-radius:3px;background:linear-gradient(#fafafb,#e4e6ec)"></div>
<svg style="left:406.8px;top:277.3px" width="6" height="3.4" viewBox="0 0 6 3.4"><path d="M0 0H6L3.0 3.4Z" fill="#8d919d"/></svg>
<svg style="left:387.5px;top:276.3px" width="9" height="4.6" viewBox="0 0 9 4.6"><path d="M0 4.6H9L4.5 0Z" fill="#a7abb7"/></svg>
<div style="left:423px;top:269.3px;width:102px;height:18.6px;background:linear-gradient(#edeff4,#e6e9ef 50%,#dfe2ea 50%,#dde0e9);border:1px solid #b5bed2"></div>
<div class="t" style="left:425.6px;top:272.0px;color:#3a4560;letter-spacing:-0.120px;transform:scaleX(0.9879);transform-origin:0 50%;">Obiekt</div>
<div style="left:508px;top:272.8px;width:14.5px;height:12px;border:1px solid #8d8d90;border-radius:3px;background:linear-gradient(#fafafb,#e4e6ec)"></div>
<svg style="left:512.3px;top:277.3px" width="6" height="3.4" viewBox="0 0 6 3.4"><path d="M0 0H6L3.0 3.4Z" fill="#8d919d"/></svg>
<svg style="left:493px;top:276.3px" width="9" height="4.6" viewBox="0 0 9 4.6"><path d="M0 4.6H9L4.5 0Z" fill="#a7abb7"/></svg>
<div style="left:528.5px;top:269.3px;width:101px;height:18.6px;background:linear-gradient(#edeff4,#e6e9ef 50%,#dfe2ea 50%,#dde0e9);border:1px solid #b5bed2"></div>
<div class="t" style="left:530.4px;top:272.0px;color:#3a4560;letter-spacing:-0.120px;transform:scaleX(0.9785);transform-origin:0 50%;">Pracownik</div>
<div style="left:612.5px;top:272.8px;width:14.5px;height:12px;border:1px solid #8d8d90;border-radius:3px;background:linear-gradient(#fafafb,#e4e6ec)"></div>
<svg style="left:616.8px;top:277.3px" width="6" height="3.4" viewBox="0 0 6 3.4"><path d="M0 0H6L3.0 3.4Z" fill="#8d919d"/></svg>
<svg style="left:597.5px;top:276.3px" width="9" height="4.6" viewBox="0 0 9 4.6"><path d="M0 4.6H9L4.5 0Z" fill="#a7abb7"/></svg>
<div style="left:633px;top:274px;width:110px;height:18px;background:linear-gradient(#e9ecf2,#e1e5ed 8px,#d9dee8 9px,#dce0ea);border-right:1px solid #eef0f5"></div>
<div class="t" style="left:635.2px;top:277px;color:#3a4560;letter-spacing:-0.120px;transform:scaleX(0.9316);transform-origin:0 50%;">części</div>
<div style="left:743px;top:274px;width:110px;height:18px;background:linear-gradient(#e9ecf2,#e1e5ed 8px,#d9dee8 9px,#dce0ea);border-right:1px solid #eef0f5"></div>
<div class="t" style="left:745px;top:277px;color:#3a4560;letter-spacing:-0.120px;transform:scaleX(0.9733);transform-origin:0 50%;">czynność</div>
<div style="left:853px;top:274px;width:110px;height:18px;background:linear-gradient(#e9ecf2,#e1e5ed 8px,#d9dee8 9px,#dce0ea);border-right:1px solid #eef0f5"></div>
<div class="t" style="left:854.8px;top:277px;color:#3a4560;letter-spacing:-0.120px;transform:scaleX(0.9695);transform-origin:0 50%;">robocizna</div>
<div style="left:963px;top:274px;width:110px;height:18px;background:linear-gradient(#e9ecf2,#e1e5ed 8px,#d9dee8 9px,#dce0ea);border-right:1px solid #eef0f5"></div>
<div class="t" style="left:964.6px;top:277px;color:#3a4560;letter-spacing:-0.051px;">serwis zewnętrzny</div>
<div style="left:1073px;top:274px;width:65px;height:18px;background:linear-gradient(#e9ecf2,#e1e5ed 8px,#d9dee8 9px,#dce0ea);border-right:1px solid #eef0f5"></div>
<div class="t" style="left:1074.4px;top:277px;color:#3a4560;letter-spacing:-0.120px;transform:scaleX(0.8786);transform-origin:0 50%;">SUMA</div>
<div style="left:204px;top:292px;width:429px;height:19px;background:linear-gradient(#eef0f4,#e7eaf0 50%,#dde0e9 50%,#e0e3eb);border-top:1px solid #f0f2f6;border-left:1px solid #eceef4"></div>
<svg style="left:211.8px;top:298.2px" width="4.2" height="8" viewBox="0 0 4.2 8"><path d="M0 0V8L4.2 4Z" fill="#3e445a"/></svg>
<div style="left:204px;top:311px;width:104px;height:76px;background:linear-gradient(#eef0f4,#e5e8ee 45%,#dee1e9 55%,#dee1e9 75%,#e0e3eb);border-top:1px solid #f0f2f6;border-left:1px solid #eceef4"></div>
<svg style="left:211.2px;top:317.8px" width="6.2" height="6.2" viewBox="0 0 6.2 6.2"><path d="M0 6.2H6.2V0Z" fill="#3e445a"/></svg>
<div class="t" style="left:224px;top:314px;color:#3a4560;letter-spacing:-0.067px;">konserwacja</div>
<div style="left:308px;top:311px;width:114px;height:19px;background:linear-gradient(#eef0f4,#e7eaf0 50%,#dde0e9 50%,#e0e3eb);border-top:1px solid #f0f2f6;border-left:1px solid #eceef4"></div>
<svg style="left:315.2px;top:317.8px" width="6.2" height="6.2" viewBox="0 0 6.2 6.2"><path d="M0 6.2H6.2V0Z" fill="#3e445a"/></svg>
<div class="t" style="left:328.2px;top:314px;color:#3a4560;letter-spacing:-0.120px;transform:scaleX(0.9794);transform-origin:0 50%;">maszyna</div>
<div style="left:422px;top:311px;width:105px;height:19px;background:linear-gradient(#eef0f4,#e7eaf0 50%,#dde0e9 50%,#e0e3eb);border-top:1px solid #f0f2f6;border-left:1px solid #eceef4"></div>
<svg style="left:429.2px;top:317.8px" width="6.2" height="6.2" viewBox="0 0 6.2 6.2"><path d="M0 6.2H6.2V0Z" fill="#3e445a"/></svg>
<div class="t" style="left:442.2px;top:314px;color:#3a4560;letter-spacing:-0.04px;">Stół montażowy</div>
<div style="left:527px;top:311px;width:106px;height:19px;background:linear-gradient(#eef0f4,#e7eaf0 50%,#dde0e9 50%,#e0e3eb);border-top:1px solid #f0f2f6;border-left:1px solid #eceef4"></div>
<div style="left:308px;top:330px;width:114px;height:57px;background:linear-gradient(#eef0f4,#e5e8ee 45%,#dee1e9 55%,#dee1e9 75%,#e0e3eb);border-top:1px solid #f0f2f6;border-left:1px solid #eceef4"></div>
<svg style="left:315.2px;top:336.8px" width="6.2" height="6.2" viewBox="0 0 6.2 6.2"><path d="M0 6.2H6.2V0Z" fill="#3e445a"/></svg>
<div class="t" style="left:328.2px;top:333px;color:#3a4560;letter-spacing:-0.120px;transform:scaleX(0.9866);transform-origin:0 50%;">narzedzie</div>
<div style="left:422px;top:330px;width:105px;height:38px;background:linear-gradient(#eef0f4,#e5e8ee 45%,#dee1e9 55%,#dee1e9 75%,#e0e3eb);border-top:1px solid #f0f2f6;border-left:1px solid #eceef4"></div>
<svg style="left:429.2px;top:336.8px" width="6.2" height="6.2" viewBox="0 0 6.2 6.2"><path d="M0 6.2H6.2V0Z" fill="#3e445a"/></svg>
<div class="t" style="left:442.2px;top:333px;color:#3a4560;">Frez walcowo ...</div>
<div style="left:527px;top:330px;width:106px;height:19px;background:linear-gradient(#eef0f4,#e7eaf0 50%,#dde0e9 50%,#e0e3eb);border-top:1px solid #f0f2f6;border-left:1px solid #eceef4"></div>
<div style="left:527px;top:349px;width:106px;height:19px;background:linear-gradient(#eef0f4,#e7eaf0 50%,#dde0e9 50%,#e0e3eb);border-top:1px solid #f0f2f6;border-left:1px solid #eceef4"></div>
<div class="t" style="left:529.4px;top:352px;color:#3a4560;letter-spacing:-0.120px;transform:scaleX(0.8672);transform-origin:0 50%;">BM</div>
<div style="left:422px;top:368px;width:211px;height:19px;background:linear-gradient(#eef0f4,#e7eaf0 50%,#dde0e9 50%,#e0e3eb);border-top:1px solid #f0f2f6;border-left:1px solid #eceef4"></div>
<div class="t" style="left:424.5px;top:371px;color:#3a4560;letter-spacing:-0.079px;">Podsuma: Frez walcowo czołowy 20x10...</div>
<div style="left:204px;top:387px;width:429px;height:19px;background:linear-gradient(#eef0f4,#e7eaf0 50%,#dde0e9 50%,#e0e3eb);border-top:1px solid #f0f2f6;border-left:1px solid #eceef4"></div>
<div class="t" style="left:206.6px;top:390px;color:#3a4560;letter-spacing:-0.120px;transform:scaleX(0.9844);transform-origin:0 50%;">Podsuma: konserwacja</div>
<div style="left:204px;top:406px;width:104px;height:209px;background:linear-gradient(#eef0f4,#e5e8ee 45%,#dee1e9 55%,#dee1e9 75%,#e0e3eb);border-top:1px solid #f0f2f6;border-left:1px solid #eceef4"></div>
<svg style="left:211.2px;top:412.8px" width="6.2" height="6.2" viewBox="0 0 6.2 6.2"><path d="M0 6.2H6.2V0Z" fill="#3e445a"/></svg>
<div class="t" style="left:224px;top:409px;color:#3a4560;letter-spacing:0.014px;">naprawa</div>
<div style="left:308px;top:406px;width:114px;height:190px;background:linear-gradient(#eef0f4,#e5e8ee 45%,#dee1e9 55%,#dee1e9 75%,#e0e3eb);border-top:1px solid #f0f2f6;border-left:1px solid #eceef4"></div>
<svg style="left:315.2px;top:412.8px" width="6.2" height="6.2" viewBox="0 0 6.2 6.2"><path d="M0 6.2H6.2V0Z" fill="#3e445a"/></svg>
<div class="t" style="left:328.2px;top:409px;color:#3a4560;letter-spacing:-0.120px;transform:scaleX(0.9794);transform-origin:0 50%;">maszyna</div>
<div style="left:422px;top:406px;width:211px;height:19px;background:linear-gradient(#eef0f4,#e7eaf0 50%,#dde0e9 50%,#e0e3eb);border-top:1px solid #f0f2f6;border-left:1px solid #eceef4"></div>
<svg style="left:429.8px;top:412.2px" width="4.2" height="8" viewBox="0 0 4.2 8"><path d="M0 0V8L4.2 4Z" fill="#3e445a"/></svg>
<div class="t" style="left:442.2px;top:409px;color:#3a4560;letter-spacing:-0.120px;transform:scaleX(0.9782);transform-origin:0 50%;">Ambulans operacyjny VW UP</div>
<div style="left:422px;top:425px;width:211px;height:19px;background:linear-gradient(#eef0f4,#e7eaf0 50%,#dde0e9 50%,#e0e3eb);border-top:1px solid #f0f2f6;border-left:1px solid #eceef4"></div>
<svg style="left:429.8px;top:431.2px" width="4.2" height="8" viewBox="0 0 4.2 8"><path d="M0 0V8L4.2 4Z" fill="#3e445a"/></svg>
<div class="t" style="left:442.2px;top:428px;color:#3a4560;letter-spacing:-0.120px;transform:scaleX(0.9070);transform-origin:0 50%;">CNC</div>
<div style="left:422px;top:444px;width:105px;height:38px;background:linear-gradient(#eef0f4,#e5e8ee 45%,#dee1e9 55%,#dee1e9 75%,#e0e3eb);border-top:1px solid #f0f2f6;border-left:1px solid #eceef4"></div>
<svg style="left:429.2px;top:450.8px" width="6.2" height="6.2" viewBox="0 0 6.2 6.2"><path d="M0 6.2H6.2V0Z" fill="#3e445a"/></svg>
<div class="t" style="left:442.2px;top:447px;color:#3a4560;letter-spacing:-0.156px;">Maszyna 1</div>
<div style="left:527px;top:444px;width:106px;height:19px;background:linear-gradient(#eef0f4,#e7eaf0 50%,#dde0e9 50%,#e0e3eb);border-top:1px solid #f0f2f6;border-left:1px solid #eceef4"></div>
<div style="left:527px;top:463px;width:106px;height:19px;background:linear-gradient(#eef0f4,#e7eaf0 50%,#dde0e9 50%,#e0e3eb);border-top:1px solid #f0f2f6;border-left:1px solid #eceef4"></div>
<div class="t" style="left:529.4px;top:466px;color:#3a4560;letter-spacing:-0.120px;transform:scaleX(0.8672);transform-origin:0 50%;">BM</div>
<div style="left:422px;top:482px;width:211px;height:19px;background:linear-gradient(#eef0f4,#e7eaf0 50%,#dde0e9 50%,#e0e3eb);border-top:1px solid #f0f2f6;border-left:1px solid #eceef4"></div>
<div class="t" style="left:424.5px;top:485px;color:#3a4560;letter-spacing:-0.120px;transform:scaleX(0.9776);transform-origin:0 50%;">Podsuma: Maszyna 1</div>
<div style="left:422px;top:501px;width:105px;height:38px;background:linear-gradient(#eef0f4,#e5e8ee 45%,#dee1e9 55%,#dee1e9 75%,#e0e3eb);border-top:1px solid #f0f2f6;border-left:1px solid #eceef4"></div>
<svg style="left:429.2px;top:507.8px" width="6.2" height="6.2" viewBox="0 0 6.2 6.2"><path d="M0 6.2H6.2V0Z" fill="#3e445a"/></svg>
<div class="t" style="left:442.2px;top:504px;color:#3a4560;letter-spacing:-0.156px;">Maszyna 2</div>
<div style="left:527px;top:501px;width:106px;height:19px;background:linear-gradient(#eef0f4,#e7eaf0 50%,#dde0e9 50%,#e0e3eb);border-top:1px solid #f0f2f6;border-left:1px solid #eceef4"></div>
<div style="left:527px;top:520px;width:106px;height:19px;background:linear-gradient(#eef0f4,#e7eaf0 50%,#dde0e9 50%,#e0e3eb);border-top:1px solid #f0f2f6;border-left:1px solid #eceef4"></div>
<div class="t" style="left:529.4px;top:523px;color:#3a4560;letter-spacing:-0.120px;transform:scaleX(0.8672);transform-origin:0 50%;">BM</div>
<div style="left:422px;top:539px;width:211px;height:19px;background:linear-gradient(#eef0f4,#e7eaf0 50%,#dde0e9 50%,#e0e3eb);border-top:1px solid #f0f2f6;border-left:1px solid #eceef4"></div>
<div class="t" style="left:424.5px;top:542px;color:#3a4560;letter-spacing:-0.120px;transform:scaleX(0.9776);transform-origin:0 50%;">Podsuma: Maszyna 2</div>
<div style="left:422px;top:558px;width:211px;height:19px;background:linear-gradient(#eef0f4,#e7eaf0 50%,#dde0e9 50%,#e0e3eb);border-top:1px solid #f0f2f6;border-left:1px solid #eceef4"></div>
<svg style="left:429.8px;top:564.2px" width="4.2" height="8" viewBox="0 0 4.2 8"><path d="M0 0V8L4.2 4Z" fill="#3e445a"/></svg>
<div class="t" style="left:442.2px;top:561px;color:#3a4560;letter-spacing:-0.120px;transform:scaleX(0.9857);transform-origin:0 50%;">Maszyna do szycia 3</div>
<div style="left:422px;top:577px;width:211px;height:19px;background:linear-gradient(#eef0f4,#e7eaf0 50%,#dde0e9 50%,#e0e3eb);border-top:1px solid #f0f2f6;border-left:1px solid #eceef4"></div>
<svg style="left:429.8px;top:583.2px" width="4.2" height="8" viewBox="0 0 4.2 8"><path d="M0 0V8L4.2 4Z" fill="#3e445a"/></svg>
<div class="t" style="left:442.2px;top:580px;color:#3a4560;letter-spacing:-0.120px;transform:scaleX(0.9694);transform-origin:0 50%;">Prasa krawędziowa UZMA CAP-E30135</div>
<div style="left:308px;top:596px;width:325px;height:19px;background:linear-gradient(#eef0f4,#e7eaf0 50%,#dde0e9 50%,#e0e3eb);border-top:1px solid #f0f2f6;border-left:1px solid #eceef4"></div>
<div class="t" style="left:310.5px;top:599px;color:#3a4560;letter-spacing:-0.120px;transform:scaleX(0.9705);transform-origin:0 50%;">Podsuma: maszyna</div>
<div style="left:204px;top:615px;width:429px;height:19px;background:linear-gradient(#eef0f4,#e7eaf0 50%,#dde0e9 50%,#e0e3eb);border-top:1px solid #f0f2f6;border-left:1px solid #eceef4"></div>
<svg style="left:211.8px;top:621.2px" width="4.2" height="8" viewBox="0 0 4.2 8"><path d="M0 0V8L4.2 4Z" fill="#3e445a"/></svg>
<div class="t" style="left:224px;top:618px;color:#3a4560;letter-spacing:-0.1px;">przeglad</div>
<div style="left:204px;top:634px;width:429px;height:19px;background:linear-gradient(#eef0f4,#e7eaf0 50%,#dde0e9 50%,#e0e3eb);border-top:1px solid #f0f2f6;border-left:1px solid #eceef4"></div>
<div class="t" style="left:206.4px;top:637px;color:#3a4560;letter-spacing:-0.120px;transform:scaleX(0.8849);transform-origin:0 50%;">SUMA</div>
<div style="left:633px;top:292px;width:110px;height:19px;background:#e4e4e4;border-right:1px solid #dcdfe8;border-bottom:1px solid #dcdfe8"></div>
<div class="t r" style="right:531.5px;top:295px;color:#000;letter-spacing:-0.08px">5,00</div>
<div style="left:743px;top:292px;width:110px;height:19px;background:#e4e4e4;border-right:1px solid #dcdfe8;border-bottom:1px solid #dcdfe8"></div>
<div style="left:853px;top:292px;width:110px;height:19px;background:#e4e4e4;border-right:1px solid #dcdfe8;border-bottom:1px solid #dcdfe8"></div>
<div style="left:963px;top:292px;width:110px;height:19px;background:#e4e4e4;border-right:1px solid #dcdfe8;border-bottom:1px solid #dcdfe8"></div>
<div style="left:1073px;top:292px;width:65px;height:19px;background:#e4e4e4;border-right:1px solid #dcdfe8;border-bottom:1px solid #dcdfe8"></div>
<div class="t r" style="right:136.5px;top:295px;color:#000;letter-spacing:-0.08px">5,00</div>
<div style="left:633px;top:311px;width:110px;height:19px;background:#fff;border-right:1px solid #dadeec;border-bottom:1px solid #dadeec"></div>
<div style="left:743px;top:311px;width:110px;height:19px;background:#fff;border-right:1px solid #dadeec;border-bottom:1px solid #dadeec"></div>
<div class="t r" style="right:421.5px;top:314px;color:#000;letter-spacing:-0.08px">16,00</div>
<div style="left:853px;top:311px;width:110px;height:19px;background:#fff;border-right:1px solid #dadeec;border-bottom:1px solid #dadeec"></div>
<div style="left:963px;top:311px;width:110px;height:19px;background:#fff;border-right:1px solid #dadeec;border-bottom:1px solid #dadeec"></div>
<div style="left:1073px;top:311px;width:65px;height:19px;background:#e4e4e4;border-right:1px solid #dcdfe8;border-bottom:1px solid #dcdfe8"></div>
<div class="t r" style="right:136.5px;top:314px;color:#000;letter-spacing:-0.08px">16,00</div>
<div style="left:633px;top:330px;width:110px;height:19px;background:#fff;border-right:1px solid #dadeec;border-bottom:1px solid #dadeec"></div>
<div style="left:743px;top:330px;width:110px;height:19px;background:#fff;border-right:1px solid #dadeec;border-bottom:1px solid #dadeec"></div>
<div class="t r" style="right:421.5px;top:333px;color:#000;letter-spacing:-0.08px">75,00</div>
<div style="left:853px;top:330px;width:110px;height:19px;background:#fff;border-right:1px solid #dadeec;border-bottom:1px solid #dadeec"></div>
<div style="left:963px;top:330px;width:110px;height:19px;background:#fff;border-right:1px solid #dadeec;border-bottom:1px solid #dadeec"></div>
<div style="left:1073px;top:330px;width:65px;height:19px;background:#e4e4e4;border-right:1px solid #dcdfe8;border-bottom:1px solid #dcdfe8"></div>
<div class="t r" style="right:136.5px;top:333px;color:#000;letter-spacing:-0.08px">75,00</div>
<div style="left:633px;top:349px;width:110px;height:19px;background:#fff;border-right:1px solid #dadeec;border-bottom:1px solid #dadeec"></div>
<div style="left:743px;top:349px;width:110px;height:19px;background:#fff;border-right:1px solid #dadeec;border-bottom:1px solid #dadeec"></div>
<div style="left:853px;top:349px;width:110px;height:19px;background:#fff;border-right:1px solid #dadeec;border-bottom:1px solid #dadeec"></div>
<div class="t r" style="right:311.5px;top:352px;color:#000;letter-spacing:-0.08px">45,00</div>
<div style="left:963px;top:349px;width:110px;height:19px;background:#fff;border-right:1px solid #dadeec;border-bottom:1px solid #dadeec"></div>
<div style="left:1073px;top:349px;width:65px;height:19px;background:#e4e4e4;border-right:1px solid #dcdfe8;border-bottom:1px solid #dcdfe8"></div>
<div class="t r" style="right:136.5px;top:352px;color:#000;letter-spacing:-0.08px">45,00</div>
<div style="left:633px;top:368px;width:110px;height:19px;background:#e4e4e4;border-right:1px solid #dcdfe8;border-bottom:1px solid #dcdfe8"></div>
<div style="left:743px;top:368px;width:110px;height:19px;background:#e4e4e4;border-right:1px solid #dcdfe8;border-bottom:1px solid #dcdfe8"></div>
<div class="t r" style="right:421.5px;top:371px;color:#000;letter-spacing:-0.08px">75,00</div>
<div style="left:853px;top:368px;width:110px;height:19px;background:#e4e4e4;border-right:1px solid #dcdfe8;border-bottom:1px solid #dcdfe8"></div>
<div class="t r" style="right:311.5px;top:371px;color:#000;letter-spacing:-0.08px">45,00</div>
<div style="left:963px;top:368px;width:110px;height:19px;background:#e4e4e4;border-right:1px solid #dcdfe8;border-bottom:1px solid #dcdfe8"></div>
<div style="left:1073px;top:368px;width:65px;height:19px;background:#e4e4e4;border-right:1px solid #dcdfe8;border-bottom:1px solid #dcdfe8"></div>
<div class="t r" style="right:136.5px;top:371px;color:#000;letter-spacing:-0.08px">120,00</div>
<div style="left:633px;top:387px;width:110px;height:19px;background:#e4e4e4;border-right:1px solid #dcdfe8;border-bottom:1px solid #dcdfe8"></div>
<div style="left:743px;top:387px;width:110px;height:19px;background:#e4e4e4;border-right:1px solid #dcdfe8;border-bottom:1px solid #dcdfe8"></div>
<div class="t r" style="right:421.5px;top:390px;color:#000;letter-spacing:-0.08px">91,00</div>
<div style="left:853px;top:387px;width:110px;height:19px;background:#e4e4e4;border-right:1px solid #dcdfe8;border-bottom:1px solid #dcdfe8"></div>
<div class="t r" style="right:311.5px;top:390px;color:#000;letter-spacing:-0.08px">45,00</div>
<div style="left:963px;top:387px;width:110px;height:19px;background:#e4e4e4;border-right:1px solid #dcdfe8;border-bottom:1px solid #dcdfe8"></div>
<div style="left:1073px;top:387px;width:65px;height:19px;background:#e4e4e4;border-right:1px solid #dcdfe8;border-bottom:1px solid #dcdfe8"></div>
<div class="t r" style="right:136.5px;top:390px;color:#000;letter-spacing:-0.08px">136,00</div>
<div style="left:633px;top:406px;width:110px;height:19px;background:#e4e4e4;border-right:1px solid #dcdfe8;border-bottom:1px solid #dcdfe8"></div>
<div style="left:743px;top:406px;width:110px;height:19px;background:#e4e4e4;border-right:1px solid #dcdfe8;border-bottom:1px solid #dcdfe8"></div>
<div class="t r" style="right:421.5px;top:409px;color:#000;letter-spacing:-0.08px">1000,00</div>
<div style="left:853px;top:406px;width:110px;height:19px;background:#e4e4e4;border-right:1px solid #dcdfe8;border-bottom:1px solid #dcdfe8"></div>
<div style="left:963px;top:406px;width:110px;height:19px;background:#e4e4e4;border-right:1px solid #dcdfe8;border-bottom:1px solid #dcdfe8"></div>
<div style="left:1073px;top:406px;width:65px;height:19px;background:#e4e4e4;border-right:1px solid #dcdfe8;border-bottom:1px solid #dcdfe8"></div>
<div class="t r" style="right:136.5px;top:409px;color:#000;letter-spacing:-0.08px">1000,00</div>
<div style="left:633px;top:425px;width:110px;height:19px;background:#e4e4e4;border-right:1px solid #dcdfe8;border-bottom:1px solid #dcdfe8"></div>
<div class="t r" style="right:531.5px;top:428px;color:#000;letter-spacing:-0.08px">5,00</div>
<div style="left:743px;top:425px;width:110px;height:19px;background:#e4e4e4;border-right:1px solid #dcdfe8;border-bottom:1px solid #dcdfe8"></div>
<div style="left:853px;top:425px;width:110px;height:19px;background:#e4e4e4;border-right:1px solid #dcdfe8;border-bottom:1px solid #dcdfe8"></div>
<div style="left:963px;top:425px;width:110px;height:19px;background:#e4e4e4;border-right:1px solid #dcdfe8;border-bottom:1px solid #dcdfe8"></div>
<div style="left:1073px;top:425px;width:65px;height:19px;background:#e4e4e4;border-right:1px solid #dcdfe8;border-bottom:1px solid #dcdfe8"></div>
<div class="t r" style="right:136.5px;top:428px;color:#000;letter-spacing:-0.08px">5,00</div>
<div style="left:633px;top:444px;width:110px;height:19px;background:#fff;border-right:1px solid #dadeec;border-bottom:1px solid #dadeec"></div>
<div style="left:743px;top:444px;width:110px;height:19px;background:#fff;border-right:1px solid #dadeec;border-bottom:1px solid #dadeec"></div>
<div class="t r" style="right:421.5px;top:447px;color:#000;letter-spacing:-0.08px">75,00</div>
<div style="left:853px;top:444px;width:110px;height:19px;background:#fff;border-right:1px solid #dadeec;border-bottom:1px solid #dadeec"></div>
<div style="left:963px;top:444px;width:110px;height:19px;background:#fff;border-right:1px solid #dadeec;border-bottom:1px solid #dadeec"></div>
<div class="t r" style="right:201.5px;top:447px;color:#000;letter-spacing:-0.08px">800,00</div>
<div style="left:1073px;top:444px;width:65px;height:19px;background:#e4e4e4;border-right:1px solid #dcdfe8;border-bottom:1px solid #dcdfe8"></div>
<div class="t r" style="right:136.5px;top:447px;color:#000;letter-spacing:-0.08px">875,00</div>
<div style="left:633px;top:463px;width:110px;height:19px;background:#fff;border-right:1px solid #dadeec;border-bottom:1px solid #dadeec"></div>
<div style="left:743px;top:463px;width:110px;height:19px;background:#fff;border-right:1px solid #dadeec;border-bottom:1px solid #dadeec"></div>
<div style="left:853px;top:463px;width:110px;height:19px;background:#fff;border-right:1px solid #dadeec;border-bottom:1px solid #dadeec"></div>
<div class="t r" style="right:311.5px;top:466px;color:#000;letter-spacing:-0.08px">45,00</div>
<div style="left:963px;top:463px;width:110px;height:19px;background:#fff;border-right:1px solid #dadeec;border-bottom:1px solid #dadeec"></div>
<div style="left:1073px;top:463px;width:65px;height:19px;background:#e4e4e4;border-right:1px solid #dcdfe8;border-bottom:1px solid #dcdfe8"></div>
<div class="t r" style="right:136.5px;top:466px;color:#000;letter-spacing:-0.08px">45,00</div>
<div style="left:633px;top:482px;width:110px;height:19px;background:#e4e4e4;border-right:1px solid #dcdfe8;border-bottom:1px solid #dcdfe8"></div>
<div style="left:743px;top:482px;width:110px;height:19px;background:#e4e4e4;border-right:1px solid #dcdfe8;border-bottom:1px solid #dcdfe8"></div>
<div class="t r" style="right:421.5px;top:485px;color:#000;letter-spacing:-0.08px">75,00</div>
<div style="left:853px;top:482px;width:110px;height:19px;background:#e4e4e4;border-right:1px solid #dcdfe8;border-bottom:1px solid #dcdfe8"></div>
<div class="t r" style="right:311.5px;top:485px;color:#000;letter-spacing:-0.08px">45,00</div>
<div style="left:963px;top:482px;width:110px;height:19px;background:#e4e4e4;border-right:1px solid #dcdfe8;border-bottom:1px solid #dcdfe8"></div>
<div class="t r" style="right:201.5px;top:485px;color:#000;letter-spacing:-0.08px">800,00</div>
<div style="left:1073px;top:482px;width:65px;height:19px;background:#e4e4e4;border-right:1px solid #dcdfe8;border-bottom:1px solid #dcdfe8"></div>
<div class="t r" style="right:136.5px;top:485px;color:#000;letter-spacing:-0.08px">920,00</div>
<div style="left:633px;top:501px;width:110px;height:19px;background:#fff;border-right:1px solid #dadeec;border-bottom:1px solid #dadeec"></div>
<div style="left:743px;top:501px;width:110px;height:19px;background:#fff;border-right:1px solid #dadeec;border-bottom:1px solid #dadeec"></div>
<div class="t r" style="right:421.5px;top:504px;color:#000;letter-spacing:-0.08px">75,00</div>
<div style="left:853px;top:501px;width:110px;height:19px;background:#fff;border-right:1px solid #dadeec;border-bottom:1px solid #dadeec"></div>
<div style="left:963px;top:501px;width:110px;height:19px;background:#fff;border-right:1px solid #dadeec;border-bottom:1px solid #dadeec"></div>
<div style="left:1073px;top:501px;width:65px;height:19px;background:#e4e4e4;border-right:1px solid #dcdfe8;border-bottom:1px solid #dcdfe8"></div>
<div class="t r" style="right:136.5px;top:504px;color:#000;letter-spacing:-0.08px">75,00</div>
<div style="left:633px;top:520px;width:110px;height:19px;background:#fff;border-right:1px solid #dadeec;border-bottom:1px solid #dadeec"></div>
<div style="left:743px;top:520px;width:110px;height:19px;background:#fff;border-right:1px solid #dadeec;border-bottom:1px solid #dadeec"></div>
<div style="left:853px;top:520px;width:110px;height:19px;background:#fff;border-right:1px solid #dadeec;border-bottom:1px solid #dadeec"></div>
<div class="t r" style="right:311.5px;top:523px;color:#000;letter-spacing:-0.08px">45,00</div>
<div style="left:963px;top:520px;width:110px;height:19px;background:#fff;border-right:1px solid #dadeec;border-bottom:1px solid #dadeec"></div>
<div style="left:1073px;top:520px;width:65px;height:19px;background:#e4e4e4;border-right:1px solid #dcdfe8;border-bottom:1px solid #dcdfe8"></div>
<div class="t r" style="right:136.5px;top:523px;color:#000;letter-spacing:-0.08px">45,00</div>
<div style="left:633px;top:539px;width:110px;height:19px;background:#e4e4e4;border-right:1px solid #dcdfe8;border-bottom:1px solid #dcdfe8"></div>
<div style="left:743px;top:539px;width:110px;height:19px;background:#e4e4e4;border-right:1px solid #dcdfe8;border-bottom:1px solid #dcdfe8"></div>
<div class="t r" style="right:421.5px;top:542px;color:#000;letter-spacing:-0.08px">75,00</div>
<div style="left:853px;top:539px;width:110px;height:19px;background:#e4e4e4;border-right:1px solid #dcdfe8;border-bottom:1px solid #dcdfe8"></div>
<div class="t r" style="right:311.5px;top:542px;color:#000;letter-spacing:-0.08px">45,00</div>
<div style="left:963px;top:539px;width:110px;height:19px;background:#e4e4e4;border-right:1px solid #dcdfe8;border-bottom:1px solid #dcdfe8"></div>
<div style="left:1073px;top:539px;width:65px;height:19px;background:#e4e4e4;border-right:1px solid #dcdfe8;border-bottom:1px solid #dcdfe8"></div>
<div class="t r" style="right:136.5px;top:542px;color:#000;letter-spacing:-0.08px">120,00</div>
<div style="left:633px;top:558px;width:110px;height:19px;background:#e4e4e4;border-right:1px solid #dcdfe8;border-bottom:1px solid #dcdfe8"></div>
<div style="left:743px;top:558px;width:110px;height:19px;background:#e4e4e4;border-right:1px solid #dcdfe8;border-bottom:1px solid #dcdfe8"></div>
<div style="left:853px;top:558px;width:110px;height:19px;background:#e4e4e4;border-right:1px solid #dcdfe8;border-bottom:1px solid #dcdfe8"></div>
<div style="left:963px;top:558px;width:110px;height:19px;background:#e4e4e4;border-right:1px solid #dcdfe8;border-bottom:1px solid #dcdfe8"></div>
<div class="t r" style="right:201.5px;top:561px;color:#000;letter-spacing:-0.08px">1200,00</div>
<div style="left:1073px;top:558px;width:65px;height:19px;background:#e4e4e4;border-right:1px solid #dcdfe8;border-bottom:1px solid #dcdfe8"></div>
<div class="t r" style="right:136.5px;top:561px;color:#000;letter-spacing:-0.08px">1200,00</div>
<div style="left:633px;top:577px;width:110px;height:19px;background:#e4e4e4;border-right:1px solid #dcdfe8;border-bottom:1px solid #dcdfe8"></div>
<div class="t r" style="right:531.5px;top:580px;color:#000;letter-spacing:-0.08px">0,00</div>
<div style="left:743px;top:577px;width:110px;height:19px;background:#e4e4e4;border-right:1px solid #dcdfe8;border-bottom:1px solid #dcdfe8"></div>
<div class="t r" style="right:421.5px;top:580px;color:#000;letter-spacing:-0.08px">150,00</div>
<div style="left:853px;top:577px;width:110px;height:19px;background:#e4e4e4;border-right:1px solid #dcdfe8;border-bottom:1px solid #dcdfe8"></div>
<div class="t r" style="right:311.5px;top:580px;color:#000;letter-spacing:-0.08px">340,00</div>
<div style="left:963px;top:577px;width:110px;height:19px;background:#e4e4e4;border-right:1px solid #dcdfe8;border-bottom:1px solid #dcdfe8"></div>
<div style="left:1073px;top:577px;width:65px;height:19px;background:#e4e4e4;border-right:1px solid #dcdfe8;border-bottom:1px solid #dcdfe8"></div>
<div class="t r" style="right:136.5px;top:580px;color:#000;letter-spacing:-0.08px">490,00</div>
<div style="left:633px;top:596px;width:110px;height:19px;background:#e4e4e4;border-right:1px solid #dcdfe8;border-bottom:1px solid #dcdfe8"></div>
<div class="t r" style="right:531.5px;top:599px;color:#000;letter-spacing:-0.08px">5,00</div>
<div style="left:743px;top:596px;width:110px;height:19px;background:#e4e4e4;border-right:1px solid #dcdfe8;border-bottom:1px solid #dcdfe8"></div>
<div class="t r" style="right:421.5px;top:599px;color:#000;letter-spacing:-0.08px">1300,00</div>
<div style="left:853px;top:596px;width:110px;height:19px;background:#e4e4e4;border-right:1px solid #dcdfe8;border-bottom:1px solid #dcdfe8"></div>
<div class="t r" style="right:311.5px;top:599px;color:#000;letter-spacing:-0.08px">430,00</div>
<div style="left:963px;top:596px;width:110px;height:19px;background:#e4e4e4;border-right:1px solid #dcdfe8;border-bottom:1px solid #dcdfe8"></div>
<div class="t r" style="right:201.5px;top:599px;color:#000;letter-spacing:-0.08px">2000,00</div>
<div style="left:1073px;top:596px;width:65px;height:19px;background:#e4e4e4;border-right:1px solid #dcdfe8;border-bottom:1px solid #dcdfe8"></div>
<div class="t r" style="right:136.5px;top:599px;color:#000;letter-spacing:-0.08px">3735,00</div>
<div style="left:633px;top:615px;width:110px;height:19px;background:#e4e4e4;border-right:1px solid #dcdfe8;border-bottom:1px solid #dcdfe8"></div>
<div class="t r" style="right:531.5px;top:618px;color:#000;letter-spacing:-0.08px">0,00</div>
<div style="left:743px;top:615px;width:110px;height:19px;background:#e4e4e4;border-right:1px solid #dcdfe8;border-bottom:1px solid #dcdfe8"></div>
<div class="t r" style="right:421.5px;top:618px;color:#000;letter-spacing:-0.08px">5004,00</div>
<div style="left:853px;top:615px;width:110px;height:19px;background:#e4e4e4;border-right:1px solid #dcdfe8;border-bottom:1px solid #dcdfe8"></div>
<div class="t r" style="right:311.5px;top:618px;color:#000;letter-spacing:-0.08px">1706,76</div>
<div style="left:963px;top:615px;width:110px;height:19px;background:#e4e4e4;border-right:1px solid #dcdfe8;border-bottom:1px solid #dcdfe8"></div>
<div style="left:1073px;top:615px;width:65px;height:19px;background:#e4e4e4;border-right:1px solid #dcdfe8;border-bottom:1px solid #dcdfe8"></div>
<div class="t r" style="right:136.5px;top:618px;color:#000;letter-spacing:-0.08px">6710,76</div>
<div style="left:633px;top:634px;width:110px;height:19px;background:#e4e4e4;border-right:1px solid #dcdfe8;border-bottom:1px solid #dcdfe8"></div>
<div class="t r" style="right:531.5px;top:637px;color:#000;letter-spacing:-0.08px">10,00</div>
<div style="left:743px;top:634px;width:110px;height:19px;background:#e4e4e4;border-right:1px solid #dcdfe8;border-bottom:1px solid #dcdfe8"></div>
<div class="t r" style="right:421.5px;top:637px;color:#000;letter-spacing:-0.08px">6395,00</div>
<div style="left:853px;top:634px;width:110px;height:19px;background:#e4e4e4;border-right:1px solid #dcdfe8;border-bottom:1px solid #dcdfe8"></div>
<div class="t r" style="right:311.5px;top:637px;color:#000;letter-spacing:-0.08px">2181,76</div>
<div style="left:963px;top:634px;width:110px;height:19px;background:#e4e4e4;border-right:1px solid #dcdfe8;border-bottom:1px solid #dcdfe8"></div>
<div class="t r" style="right:201.5px;top:637px;color:#000;letter-spacing:-0.08px">2000,00</div>
<div style="left:1073px;top:634px;width:65px;height:19px;background:#e4e4e4;border-right:1px solid #dcdfe8;border-bottom:1px solid #dcdfe8"></div>
<div class="t r" style="right:136.5px;top:637px;color:#000;letter-spacing:-0.08px">10586,76</div>
<div style="left:724.4px;top:664.2px;width:2.2px;height:1.3px;background:#7d8cae"></div>
<div style="left:728.0px;top:664.2px;width:2.2px;height:1.3px;background:#7d8cae"></div>
<div style="left:731.6px;top:664.2px;width:2.2px;height:1.3px;background:#7d8cae"></div>
<div style="left:735.1999999999999px;top:664.2px;width:2.2px;height:1.3px;background:#7d8cae"></div>
<div class="t" style="left:644.6px;top:668px;color:#1e2842;letter-spacing:2.251px;">POKAŻ SZCZEGÓŁY [F8]</div>
</body></html>
